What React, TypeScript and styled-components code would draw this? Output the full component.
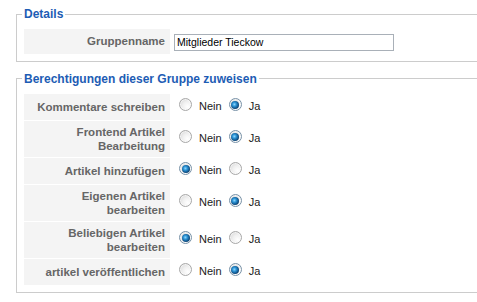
import React from 'react';
import styled, { createGlobalStyle, css } from 'styled-components';

const GlobalStyle = createGlobalStyle`
  html, body {
    margin: 0;
    padding: 0;
    background: #ffffff;
    overflow: hidden;
  }
  body {
    font-family: "Liberation Sans", Arial, sans-serif;
  }
`;

// the screenshot is cropped on the right, so the panels run flush to the edge
const Page = styled.div`
  box-sizing: border-box;
  width: 477px;
  padding: 7px 0 0 16px;
`;

const Fieldset = styled.fieldset`
  margin: 0 0 10px 0;
  padding: 7px 6px 6px 6px;
  border: 1px solid #cccccc;
  border-right-width: 0;
  min-width: 0;
`;

const Legend = styled.legend`
  padding: 0 2px;
  margin-left: -1px;
  font-size: 12px;
  line-height: 14px;
  font-weight: bold;
  color: #1d5cb4;
`;

const FormTable = styled.table`
  border-collapse: separate;
  border-spacing: 1px;
`;

const KeyCell = styled.td`
  width: 136px;
  padding: 4px 5px;
  background: #f4f4f4;
  color: #666666;
  font-size: 11.5px;
  line-height: 14px;
  font-weight: bold;
  text-align: right;
  vertical-align: middle;
`;

const ValueCell = styled.td<{ $tight?: boolean }>`
  padding: ${({ $tight }) => ($tight ? '3px 3px' : '4px 8px')};
  vertical-align: middle;
`;

const TextInput = styled.input`
  box-sizing: border-box;
  width: 220px;
  height: 17px;
  margin: 0;
  padding: 0 2px;
  border: 1px solid #a9b0b8;
  font-family: "Liberation Sans", Arial, sans-serif;
  font-size: 10.5px;
  color: #000000;
  outline: none;
`;

const RadioGroup = styled.div`
  display: flex;
  align-items: center;
  height: 18px;
`;

const Option = styled.label`
  display: inline-flex;
  align-items: center;
  margin-right: 7px;
  font-size: 11px;
  color: #1a1a1a;
`;

const Radio = styled.span<{ $checked: boolean }>`
  position: relative;
  box-sizing: border-box;
  width: 13px;
  height: 13px;
  margin: 0 7px 4px 0;
  border-radius: 50%;
  border: 1px solid #a8a8a8;
  background: radial-gradient(circle at 70% 70%, #ffffff 0%, #f0f0f0 45%, #d0d0d0 100%);
  box-shadow: inset 0 0 0 1px rgba(255, 255, 255, 0.6);

  ${({ $checked }) =>
    $checked &&
    css`
      border-color: #7892a8;
      &::after {
        content: '';
        position: absolute;
        left: 1.5px;
        top: 1.5px;
        width: 8px;
        height: 8px;
        border-radius: 50%;
        background: radial-gradient(circle at 42% 42%, #8fd8ff 0%, #2a92d4 30%, #0f4c80 65%, #08243f 100%);
      }
    `}
`;

const OptionText = styled.span`
  line-height: 13px;
`;

type Perm = { label: React.ReactNode; yes: boolean };

const permissions: Perm[] = [
  { label: 'Kommentare schreiben', yes: true },
  { label: <>Frontend Artikel<br />Bearbeitung</>, yes: true },
  { label: 'Artikel hinzufügen', yes: false },
  { label: <>Eigenen Artikel<br />bearbeiten</>, yes: true },
  { label: <>Beliebigen Artikel<br />bearbeiten</>, yes: false },
  { label: 'artikel veröffentlichen', yes: true },
];

const YesNo: React.FC<{ yes: boolean }> = ({ yes }) => (
  <RadioGroup>
    <Option>
      <Radio $checked={!yes} />
      <OptionText>Nein</OptionText>
    </Option>
    <Option>
      <Radio $checked={yes} />
      <OptionText>Ja</OptionText>
    </Option>
  </RadioGroup>
);

export default function App() {
  return (
    <>
      <GlobalStyle />
      <Page>
        <Fieldset>
          <Legend>Details</Legend>
          <FormTable>
            <tbody>
              <tr>
                <KeyCell>Gruppenname</KeyCell>
                <ValueCell $tight>
                  <TextInput defaultValue="Mitglieder Tieckow" />
                </ValueCell>
              </tr>
            </tbody>
          </FormTable>
        </Fieldset>

        <Fieldset>
          <Legend>Berechtigungen dieser Gruppe zuweisen</Legend>
          <FormTable>
            <tbody>
              {permissions.map((perm, index) => (
                <tr key={index}>
                  <KeyCell>{perm.label}</KeyCell>
                  <ValueCell>
                    <YesNo yes={perm.yes} />
                  </ValueCell>
                </tr>
              ))}
            </tbody>
          </FormTable>
        </Fieldset>
      </Page>
    </>
  );
}
